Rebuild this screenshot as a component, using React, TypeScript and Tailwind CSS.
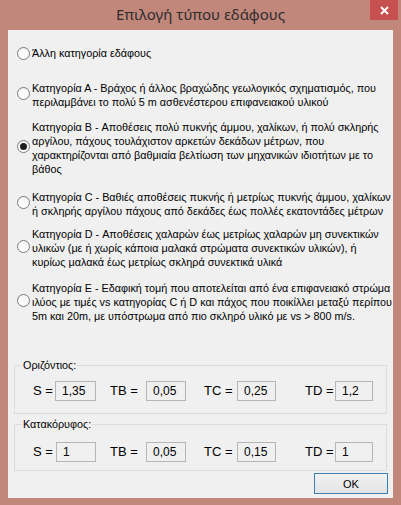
import React from 'react';

/**
 * "Επιλογή τύπου εδάφους" — soil category picker dialog (Windows 8 style)
 */

interface SoilOption {
  lines: string[];
  top: string; // margin class above the option
  checked?: boolean;
}

interface ValueCell {
  label: string;
  value: string;
  gap: string; // margin before the label
  labelW: string; // label cell incl. spacing to the box
  boxW: string;
}

const OPTIONS: SoilOption[] = [
  { lines: ['Άλλη κατηγορία εδάφους'], top: 'mt-[16px]' },
  {
    lines: [
      'Κατηγορία Α - Βράχος ή άλλος βραχώδης γεωλογικός σχηματισμός, που',
      'περιλαμβάνει το πολύ 5 m ασθενέστερου επιφανειακού υλικού',
    ],
    top: 'mt-[21px]',
  },
  {
    lines: [
      'Κατηγορία B - Αποθέσεις πολύ πυκνής άμμου, χαλίκων, ή πολύ σκληρής',
      'αργίλου, πάχους τουλάχιστον αρκετών δεκάδων μέτρων, που',
      'χαρακτηρίζονται από βαθμιαία βελτίωση των μηχανικών ιδιοτήτων με το',
      'βάθος',
    ],
    top: 'mt-[11px]',
    checked: true,
  },
  {
    lines: [
      'Κατηγορία C - Βαθιές αποθέσεις πυκνής ή μετρίως πυκνής άμμου, χαλίκων',
      'ή σκληρής αργίλου πάχους από δεκάδες έως πολλές εκατοντάδες μέτρων',
    ],
    top: 'mt-[14px]',
  },
  {
    lines: [
      'Κατηγορία D - Αποθέσεις χαλαρών έως μετρίως χαλαρών μη συνεκτικών',
      'υλικών (με ή χωρίς κάποια μαλακά στρώματα συνεκτικών υλικών), ή',
      'κυρίως μαλακά έως μετρίως σκληρά συνεκτικά υλικά',
    ],
    top: 'mt-[9px]',
  },
  {
    lines: [
      'Κατηγορία E - Εδαφική τομή που αποτελείται από ένα επιφανειακό στρώμα',
      'ιλύος με τιμές vs κατηγορίας C ή D και πάχος που ποικίλλει μεταξύ περίπου',
      '5m και 20m, με υπόστρωμα από πιο σκληρό υλικό με vs > 800 m/s.',
    ],
    top: 'mt-[12px]',
  },
];

const HORIZONTAL: ValueCell[] = [
  { label: 'S =', value: '1,35', gap: 'ml-[18px]', labelW: 'w-[22px]', boxW: 'w-[41px]' },
  { label: 'TB =', value: '0,05', gap: 'ml-[14px]', labelW: 'w-[36px]', boxW: 'w-[40px]' },
  { label: 'TC =', value: '0,25', gap: 'ml-[18px]', labelW: 'w-[33px]', boxW: 'w-[39px]' },
  { label: 'TD =', value: '1,2', gap: 'ml-[29px]', labelW: 'w-[30px]', boxW: 'w-[38px]' },
];

const VERTICAL: ValueCell[] = [
  { label: 'S =', value: '1', gap: 'ml-[18px]', labelW: 'w-[23px]', boxW: 'w-[40px]' },
  { label: 'TB =', value: '0,05', gap: 'ml-[14px]', labelW: 'w-[36px]', boxW: 'w-[40px]' },
  { label: 'TC =', value: '0,15', gap: 'ml-[18px]', labelW: 'w-[33px]', boxW: 'w-[39px]' },
  { label: 'TD =', value: '1', gap: 'ml-[29px]', labelW: 'w-[30px]', boxW: 'w-[38px]' },
];

function Radio({ checked }: { checked?: boolean }) {
  return (
    <div className="w-[13px] h-[13px] shrink-0 rounded-full border border-[#7a7a7a] bg-gradient-to-b from-[#f4f4f4] to-white flex items-center justify-center">
      {checked && <div className="w-[7px] h-[7px] rounded-full bg-[#1e1e1e]" />}
    </div>
  );
}

function ValueRow({ items }: { items: ValueCell[] }) {
  return (
    <div className="flex items-center">
      {items.map((it) => (
        <div key={it.label} className={`flex items-center ${it.gap}`}>
          <span className={`${it.labelW} text-[13px] leading-[14px] whitespace-nowrap`}>{it.label}</span>
          <div className={`${it.boxW} h-[20px] border border-[#b5b5b5] bg-[#f0f0f0] flex items-center pl-[6px] text-[12px]`}>
            {it.value}
          </div>
        </div>
      ))}
    </div>
  );
}

export default function App() {
  return (
    <div className="w-[401px] h-[505px] bg-[#c2877b] flex flex-col text-black font-['Liberation_Sans',Arial,sans-serif]">
      {/* Title bar */}
      <div className="h-[30px] shrink-0 relative flex items-center justify-center">
        <span className="text-[15px] text-[#2e2e2e] font-['Noto_Sans',sans-serif] -mt-[2px]">
          Επιλογή τύπου εδάφους
        </span>
        <div className="absolute top-0 right-[3px] w-[28px] h-[20px] bg-[#c75050] flex items-center justify-center">
          <svg width="9" height="9" viewBox="0 0 9 9">
            <path d="M1 1L8 8M8 1L1 8" stroke="white" strokeWidth="1.8" />
          </svg>
        </div>
      </div>

      {/* Client area */}
      <div className="mx-[8px] h-[468px] bg-[#f0f0f0] flex flex-col text-[10.8px] leading-[14px]">
        {OPTIONS.map((opt, i) => (
          <div key={i} className={`flex items-center gap-[2px] pl-[9px] ${opt.top}`}>
            <div className={opt.lines.length > 1 ? 'mb-[4px]' : ''}>
              <Radio checked={opt.checked} />
            </div>
            <div className="whitespace-nowrap">
              {opt.lines.map((l, j) => (
                <div key={j}>{l}</div>
              ))}
            </div>
          </div>
        ))}

        {/* Οριζόντιος */}
        <fieldset className="mt-[35px] mx-[6px] border border-[#dcdcdc] pb-[12px]">
          <legend className="ml-[7px] px-[1px] leading-[14px]">Οριζόντιος:</legend>
          <div className="mt-[9px]">
            <ValueRow items={HORIZONTAL} />
          </div>
        </fieldset>

        {/* Κατακόρυφος */}
        <fieldset className="mt-[3px] mx-[6px] border border-[#dcdcdc] pb-[8px]">
          <legend className="ml-[7px] px-[1px] leading-[14px]">Κατακόρυφος:</legend>
          <div className="mt-[11px]">
            <ValueRow items={VERTICAL} />
          </div>
        </fieldset>

        <div className="flex justify-end mt-[2px] mr-[5px]">
          <button className="w-[74px] h-[21px] border border-[#3c7fb1] bg-gradient-to-b from-[#f2f2f2] to-[#e3e3e3] text-[11px] flex items-center justify-center">
            OK
          </button>
        </div>
      </div>
    </div>
  );
}
